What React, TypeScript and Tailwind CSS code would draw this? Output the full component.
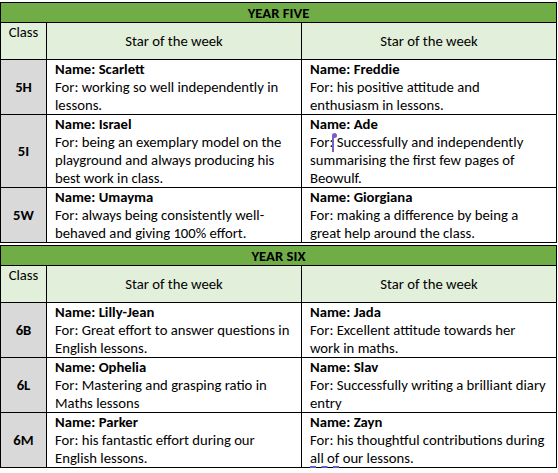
const yearFive = [
  {
    cls: '5H',
    a: { name: 'Scarlett', forText: 'working so well independently in lessons.' },
    b: { name: 'Freddie', forText: 'his positive attitude and enthusiasm in lessons.' },
  },
  {
    cls: '5I',
    a: { name: 'Israel', forText: 'being an exemplary model on the playground and always producing his best work in class.' },
    b: { name: 'Ade', forText: 'Successfully and independently summarising the first few pages of Beowulf.', cursor: true },
  },
  {
    cls: '5W',
    a: { name: 'Umayma', forText: 'always being consistently well-behaved and giving 100% effort.' },
    b: { name: 'Giorgiana', forText: 'making a difference by being a great help around the class.' },
  },
]

const yearSix = [
  {
    cls: '6B',
    a: { name: 'Lilly-Jean', forText: 'Great effort to answer questions in English lessons.' },
    b: { name: 'Jada', forText: 'Excellent attitude towards her work in maths.' },
  },
  {
    cls: '6L',
    a: { name: 'Ophelia', forText: 'Mastering and grasping ratio in Maths lessons' },
    b: { name: 'Slav', forText: 'Successfully writing a brilliant diary entry' },
  },
  {
    cls: '6M',
    a: { name: 'Parker', forText: 'his fantastic effort during our English lessons.' },
    b: { name: 'Zayn', forText: 'his thoughtful contributions during', tail: true },
  },
]

type Star = { name: string; forText: string; cursor?: boolean; tail?: boolean }

function StarCell({ s }: { s: Star }) {
  return (
    <td className="border border-black px-[8px] py-0 align-top">
      <div className="font-bold">Name: {s.name}</div>
      <div>
        For:
        {s.cursor && (
          <span className="relative inline-block w-0 h-[14px] align-[-3px]">
            <span className="absolute left-[-1px] top-0 w-[2px] h-[16px] bg-[#7b5fc9]" />
            <span className="absolute left-[-1px] top-[-3px] w-[5px] h-[5px] rounded-full bg-[#7b5fc9]" />
          </span>
        )}{' '}
        {s.forText}
        {s.tail && (
          <>
            {' '}
            <span className="underline decoration-dashed decoration-[#6a5acd] decoration-2 underline-offset-[3px]">all of</span>{' '}
            our lessons.
          </>
        )}
      </div>
    </td>
  )
}

function YearTable({ title, rows }: { title: string; rows: typeof yearFive }) {
  return (
    <table className="table-fixed border-collapse w-[556px] border border-black">
      <colgroup>
        <col className="w-[46px]" />
        <col className="w-[255px]" />
        <col className="w-[255px]" />
      </colgroup>
      <tbody>
        <tr className="h-[20px]">
          <td colSpan={3} className="border border-black bg-[#70ad47] text-center font-bold leading-[18px]">
            {title}
          </td>
        </tr>
        <tr className="h-[37px] bg-[#e2efda]">
          <td className="border border-black text-center align-top">Class</td>
          <td className="border border-black text-center align-middle">Star of the week</td>
          <td className="border border-black text-center align-middle">Star of the week</td>
        </tr>
        {rows.map((r) => (
          <tr key={r.cls}>
            <td className="border border-black bg-[#d9d9d9] text-center align-middle font-bold">{r.cls}</td>
            <StarCell s={r.a} />
            <StarCell s={r.b} />
          </tr>
        ))}
      </tbody>
    </table>
  )
}

export default function App() {
  return (
    <div className="w-[558px] h-[473px] bg-white text-black text-[14.7px] leading-[18px] font-['Carlito','Lato','Liberation_Sans',sans-serif] pt-[2px] flex flex-col gap-[2px]">
      <YearTable title="YEAR FIVE" rows={yearFive} />
      <YearTable title="YEAR SIX" rows={yearSix} />
    </div>
  )
}
